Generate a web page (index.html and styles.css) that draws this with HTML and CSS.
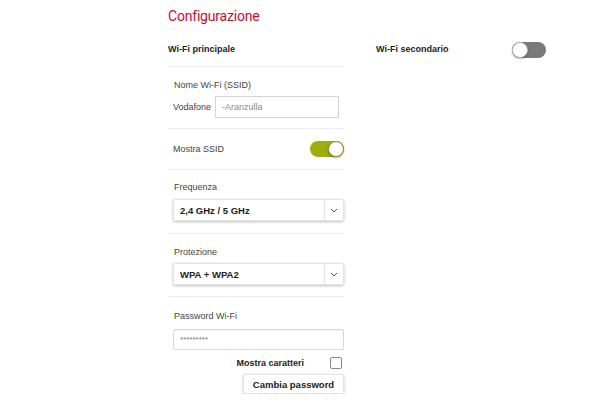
FILE: index.html
```html
<!DOCTYPE html>
<html lang="it">

<head>
    <meta charset="UTF-8">
    <meta name="viewport" content="width=device-width, initial-scale=1.0">
    <title>Configurazione</title>
    <link rel="stylesheet" href="styles.css">
</head>

<body>

    <h1 class="title">Configurazione</h1>

    <div class="columns">
        <div class="col main">
            <div class="head">Wi-Fi principale</div>

            <div class="section ssid">
                <div class="label">Nome Wi-Fi (SSID)</div>
                <div class="ssid-row">
                    <span class="prefix">Vodafone</span>
                    <input class="field" type="text" placeholder="-Aranzulla">
                </div>
            </div>

            <div class="section row">
                <span class="label">Mostra SSID</span>
                <span class="toggle on"><i></i></span>
            </div>

            <div class="section freq">
                <div class="label">Frequenza</div>
                <div class="select">
                    <span>2,4 GHz / 5 GHz</span>
                    <b class="arrow">
                        <svg width="8" height="5" viewBox="0 0 8 5"><path d="M1 1l3 3 3-3" fill="none" stroke="#555" stroke-width="1"/></svg>
                    </b>
                </div>
            </div>

            <div class="section prot">
                <div class="label">Protezione</div>
                <div class="select">
                    <span>WPA + WPA2</span>
                    <b class="arrow">
                        <svg width="8" height="5" viewBox="0 0 8 5"><path d="M1 1l3 3 3-3" fill="none" stroke="#555" stroke-width="1"/></svg>
                    </b>
                </div>
            </div>

            <div class="section pass">
                <div class="label">Password Wi-Fi</div>
                <div class="field pwd">*********</div>
                <div class="show">
                    <span>Mostra caratteri</span>
                    <i class="check"></i>
                </div>
                <div class="btn-row">
                    <button class="btn">Cambia password</button>
                </div>
            </div>
        </div>

        <div class="col second">
            <div class="head">
                <span>Wi-Fi secondario</span>
                <span class="toggle off"><i></i></span>
            </div>
        </div>
    </div>

</body>

</html>
```

FILE: styles.css
```css
html,
body {
    margin: 0;
    padding: 0;
    background: #fff;
}

body {
    padding-left: 168px;
    font-family: "Liberation Sans", Arial, sans-serif;
    font-size: 9px;
    color: #444;
}

.title {
    margin: 0;
    padding-top: 6px;
    height: 20px;
    line-height: 20px;
    font-family: Roboto, "Liberation Sans", sans-serif;
    font-size: 14px;
    font-weight: 400;
    color: #cf0b2c;
    letter-spacing: -0.2px;
}

.columns {
    display: flex;
    gap: 32px;
}

.col.main {
    width: 176px;
}

.col.second {
    width: 170px;
}

.head {
    height: 35px;
    padding-top: 5px;
    display: flex;
    align-items: center;
    justify-content: space-between;
    font-weight: bold;
    color: #222;
    border-bottom: 1px solid #ececec;
}

.second .head {
    border-bottom: none;
}

.section {
    padding-left: 5px;
    border-bottom: 1px solid #ececec;
}

.label {
    line-height: 12px;
}

div.label {
    padding-top: 1px;
    padding-left: 1px;
}

.ssid {
    padding-top: 11px;
    padding-bottom: 10px;
}

.ssid-row {
    margin-top: 5px;
    display: flex;
    align-items: center;
}

.prefix {
    width: 42px;
}

.field {
    box-sizing: border-box;
    width: 124px;
    height: 22px;
    border: 1px solid #d4d4d4;
    padding: 0 6px;
    font-family: inherit;
    font-size: 9px;
    color: #444;
    outline: none;
}

.field::placeholder {
    color: #8a8a8a;
}

.row {
    height: 40px;
    display: flex;
    align-items: center;
    justify-content: space-between;
}

.toggle {
    position: relative;
    display: inline-block;
    width: 34px;
    height: 16px;
    border-radius: 8px;
}

.toggle i {
    position: absolute;
    top: 0;
    width: 16px;
    height: 16px;
    box-sizing: border-box;
    border-radius: 50%;
    background: #fff;
    border: 1px solid #999;
    box-shadow: 0 1px 2px rgba(0, 0, 0, 0.3);
}

.toggle.on {
    background: #9fab0f;
}

.toggle.on i {
    right: 0;
    border-color: #8f9a10;
}

.toggle.off {
    background: #7a7a7a;
    margin-top: 3px;
}

.toggle.off i {
    left: 0;
    border-color: #bbb;
}

.freq {
    padding-top: 10px;
    padding-bottom: 12px;
}

.prot {
    padding-top: 11px;
    padding-bottom: 11px;
}

.select {
    margin-top: 6px;
    height: 22px;
    box-sizing: border-box;
    display: flex;
    align-items: center;
    border: 1px solid #e2e2e2;
    border-radius: 2px;
    box-shadow: 0 1px 3px rgba(0, 0, 0, 0.25);
    font-size: 9.5px;
    font-weight: bold;
    color: #222;
}

.prot .select {
    margin-top: 5px;
}

.select span {
    flex: 1;
    padding-left: 6px;
}

.arrow {
    width: 18px;
    height: 100%;
    display: flex;
    align-items: center;
    justify-content: center;
    border-left: 1px solid #e2e2e2;
}

.pass {
    padding-top: 12px;
    border-bottom: none;
}

.pwd {
    margin-top: 7px;
    width: 171px;
    height: 21px;
    line-height: 19px;
    padding: 0 6px;
    font-size: 8px;
    color: #777;
    border-color: #d8d8d8;
    border-radius: 2px;
    box-shadow: inset 0 1px 1px rgba(0, 0, 0, 0.06);
}

.show {
    margin-top: 7px;
    height: 12px;
    display: flex;
    align-items: center;
    justify-content: flex-end;
    font-weight: bold;
    color: #222;
}

.check {
    width: 12px;
    height: 12px;
    box-sizing: border-box;
    margin-left: 26px;
    margin-right: 2px;
    border: 1px solid #888;
    border-radius: 2px;
}

.btn-row {
    margin-top: 5px;
    display: flex;
    justify-content: flex-end;
}

.btn {
    width: 101px;
    height: 20px;
    padding: 0;
    background: #fff;
    border: 1px solid #e4e4e4;
    border-radius: 2px;
    box-shadow: 0 1px 3px rgba(0, 0, 0, 0.25);
    font-family: inherit;
    font-size: 9.5px;
    font-weight: bold;
    color: #222;
}
```
